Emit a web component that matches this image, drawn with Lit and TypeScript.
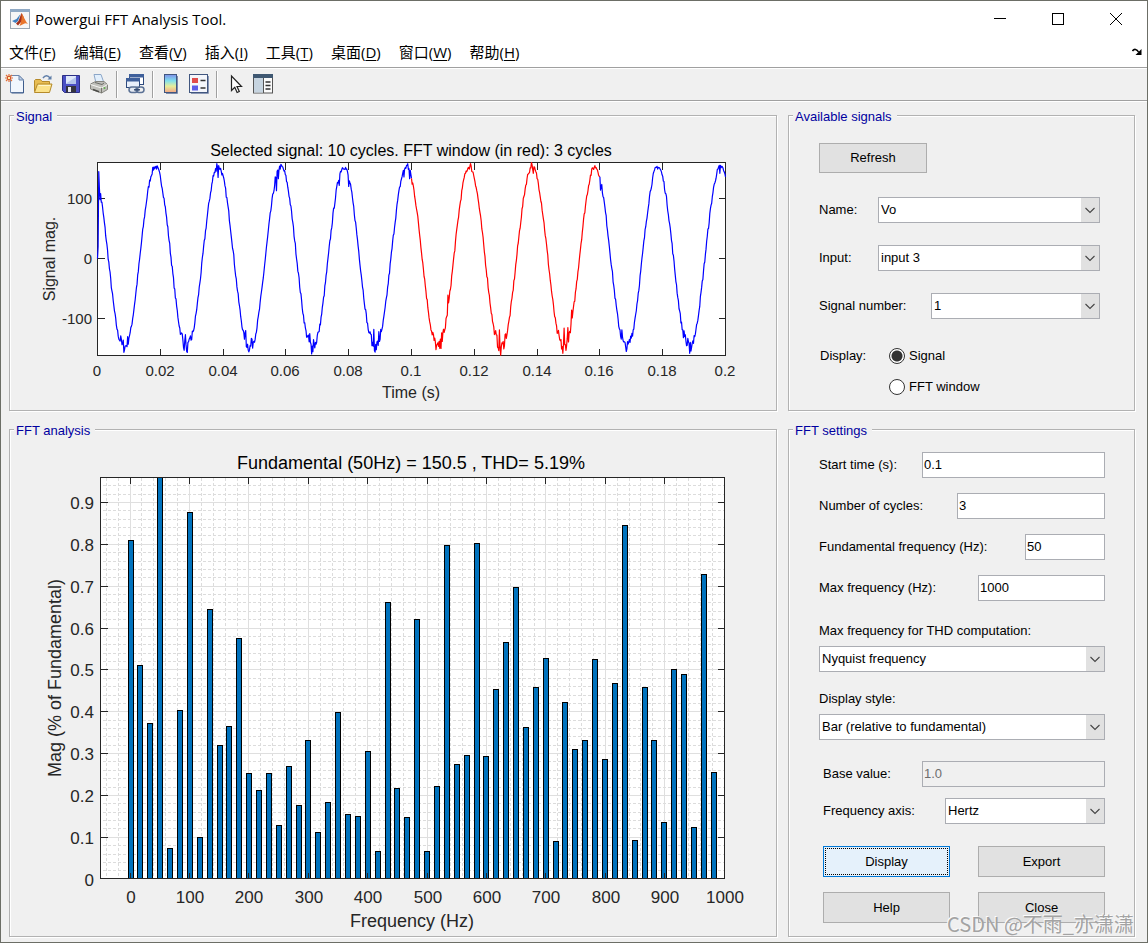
import { LitElement, html, css, svg } from "lit";
import { customElement, state } from "lit/decorators.js";

/** Text shared by both plots. */
const plotStyles = css`
  :host {
    display: block;
  }
  svg {
    display: block;
    width: 100%;
    height: auto;
    font-family: "Liberation Sans", Arial, sans-serif;
    fill: #262626;
  }
  .crisp {
    shape-rendering: crispEdges;
  }
  .face {
    fill: #fff;
  }
  .axis {
    fill: none;
    stroke: #262626;
    stroke-width: 1;
  }
  .title {
    fill: #000;
  }
  .mid {
    text-anchor: middle;
  }
  .end {
    text-anchor: end;
  }
`;

const half = (v: number) => Math.floor(v) + 0.5;

/** Disturbances on the waveform: [time in ms, magnitude]. */
const SPIKES: Array<[number, number]> = [
  [0, 0], [0.2, 20], [0.4, 145], [0.6, 118], [0.8, 98], [1.0, 108], [1.2, 94],
  [7.4, -129], [8.2, -136], [27.0, -126], [27.6, -153], [28.0, -127], [28.4, -155], [29.6, -129],
  [38.0, 158], [38.4, 135], [47.2, -120], [49.0, -133], [56.6, 136], [57.0, 113], [57.6, 133],
  [67.6, -125], [68.2, -159], [68.8, -135], [77.0, 122], [80.0, 120], [87.0, -126], [88.0, -118],
  [88.4, -156], [89.6, -122], [98.8, 158], [99.4, 133], [100.2, 124], [109.6, -124], [111.0, -100],
  [111.6, -61], [116.6, 131], [118.8, 158], [128.0, -119], [128.4, -161], [129.8, -127],
  [138.2, 160], [138.8, 142], [148.6, -116], [148.2, -158], [149.8, -115], [151.0, -86],
  [160.2, 114], [166.4, -119], [167.0, -119], [186.4, -119], [187.2, -127], [188.6, -158],
  [198.2, 142], [188.0, -133], [168.4, -155], [97.6, 136], [36.8, 138],
];

function buildWave(): number[] {
  let seed = 7;
  const rand = () => {
    seed = (seed * 16807) % 2147483647;
    return seed / 2147483647 - 0.5;
  };
  const out: number[] = [];
  for (let i = 0; i <= 1000; i++) {
    const ms = i * 0.2;
    const c = Math.cos((2 * Math.PI * (ms - 18.45)) / 20);
    const rough = c < -0.85 ? 19 : 9;
    const lift = c < -0.85 ? 5 : 0;
    out.push(153 * c + lift + rand() * rough);
  }
  for (const [ms, v] of SPIKES) out[Math.round(ms / 0.2)] = v;
  return out;
}

@customElement("signal-plot")
export class SignalPlot extends LitElement {
  static styles = [
    plotStyles,
    css`
      .tick {
        font-size: 15px;
      }
      .label {
        font-size: 16px;
      }
      .wave {
        fill: none;
        stroke: #00f;
        stroke-width: 1.2;
        stroke-linejoin: round;
      }
      .window {
        stroke: #f00;
      }
    `,
  ];

  private wave = buildWave();

  private trace(from: number, to: number) {
    return this.wave
      .slice(from, to + 1)
      .map((v, i) => `${(87.5 + (from + i) * 0.628).toFixed(2)},${(135.5 - v * 0.6).toFixed(2)}`)
      .join(" ");
  }

  render() {
    const xt = Array.from({ length: 11 }, (_, i) => i);
    return html`<svg viewBox="0 0 766 287" role="img" aria-label="Selected signal">
      <rect class="face" x="87" y="39" width="629" height="194"></rect>
      <g class="axis crisp">
        <rect x="87.5" y="39.5" width="628" height="193"></rect>
        ${xt.slice(1, 10).map((i) => {
          const x = half(87.5 + i * 62.8);
          return svg`<path d="M${x} 232.5v-7M${x} 39.5v7"></path>`;
        })}
        ${[100, 0, -100].map((v) => {
          const y = 135.5 - v * 0.6;
          return svg`<path d="M87.5 ${y}h7M715.5 ${y}h-7"></path>`;
        })}
      </g>
      <polyline class="wave" points=${this.trace(0, 500)}></polyline>
      <polyline class="wave window" points=${this.trace(500, 800)}></polyline>
      <polyline class="wave" points=${this.trace(800, 1000)}></polyline>
      <g class="tick mid">
        ${xt.map((i) => svg`<text x=${Math.floor(87.5 + i * 62.8)} y="253">${String(i / 50)}</text>`)}
      </g>
      <g class="tick end">
        ${[100, 0, -100].map((v) => svg`<text x="82" y=${141 - v * 0.6}>${v}</text>`)}
      </g>
      <text class="label title mid" x="401" y="33">Selected signal: 10 cycles. FFT window (in red): 3 cycles</text>
      <text class="label mid" x="401" y="275">Time (s)</text>
      <text class="label mid" transform="translate(45 136) rotate(-90)">Signal mag.</text>
    </svg>`;
  }
}

/** Magnitude (% of fundamental) of each bin, 50/3 Hz apart. */
const BINS = [
  0.81, 0.51, 0.373, 100, 0.073, 0.403, 0.875, 0.099, 0.645, 0.32, 0.365, 0.575, 0.253, 0.212, 0.253,
  0.129, 0.269, 0.176, 0.332, 0.111, 0.183, 0.399, 0.154, 0.15, 0.305, 0.066, 0.662, 0.217, 0.147,
  0.621, 0.066, 0.221, 0.798, 0.274, 0.296, 0.803, 0.293, 0.453, 0.566, 0.697, 0.363, 0.458, 0.528,
  0.09, 0.423, 0.31, 0.332, 0.525, 0.287, 0.468, 0.846, 0.092, 0.458, 0.332, 0.135, 0.501, 0.489,
  0.124, 0.729, 0.255,
];

@customElement("spectrum-plot")
export class SpectrumPlot extends LitElement {
  static styles = [
    plotStyles,
    css`
      .tick {
        font-size: 17px;
      }
      .label {
        font-size: 18px;
      }
      .major {
        stroke: #dfdfdf;
        fill: none;
      }
      .minor {
        stroke: #dcdcdc;
        stroke-dasharray: 3 2;
        fill: none;
      }
      .bar {
        fill: #0072bd;
        stroke: #000;
        stroke-width: 1;
      }
    `,
  ];

  render() {
    const px = (hz: number) => half(120.1 + hz * 0.594);
    const py = (v: number) => half(442.2 - v * 418.6);
    const xs = Array.from({ length: 11 }, (_, i) => i * 100);
    const ys = Array.from({ length: 10 }, (_, i) => i / 10);
    const minorX = Array.from({ length: 52 }, (_, i) => -40 + i * 20).filter((v) => v % 100 !== 0);
    const minorY = Array.from({ length: 48 }, (_, i) => i).filter((i) => i % 5 !== 0);
    return html`<svg viewBox="0 0 766 499" role="img" aria-label="FFT analysis">
      <rect class="face" x="90" y="40" width="625" height="402"></rect>
      <g class="crisp minor">
        ${minorX.map((v) => svg`<path d="M${px(v)} 41V441"></path>`)}
        ${minorY.map((i) => svg`<path d="M93 ${py(i / 50)}H714"></path>`)}
      </g>
      <g class="crisp major">
        ${xs.slice(0, 10).map((v) => svg`<path d="M${px(v)} 41V441"></path>`)}
        ${ys.slice(1).map((v) => svg`<path d="M91 ${py(v)}H714"></path>`)}
      </g>
      <g class="crisp bar">
        ${BINS.map((v, i) => {
          const x = half(118.05 + i * 9.885);
          const y = v > 0.96 ? 40.5 : py(v);
          return svg`<rect x=${x} y=${y} width="5" height=${441.5 - y}></rect>`;
        })}
      </g>
      <g class="axis crisp">
        <rect x="90.5" y="40.5" width="624" height="401"></rect>
        ${xs.slice(0, 10).map((v) => svg`<path d="M${px(v)} 441.5v-6M${px(v)} 40.5v6"></path>`)}
        ${ys.slice(1).map((v) => svg`<path d="M90.5 ${py(v)}h7M714.5 ${py(v)}h-7"></path>`)}
      </g>
      <g class="tick mid">
        ${xs.map((v) => svg`<text x=${Math.round(px(v))} y="466">${v}</text>`)}
      </g>
      <g class="tick end">
        ${ys.map((v) => svg`<text x="84" y=${Math.round(py(v)) + 6}>${v}</text>`)}
      </g>
      <text class="label title mid" x="401" y="32">Fundamental (50Hz) = 150.5 , THD= 5.19%</text>
      <text class="label mid" x="402" y="490">Frequency (Hz)</text>
      <text class="label mid" transform="translate(51 241) rotate(-90)">Mag (% of Fundamental)</text>
    </svg>`;
  }
}

const MENUS = [
  ["文件", "F"], ["编辑", "E"], ["查看", "V"], ["插入", "I"],
  ["工具", "T"], ["桌面", "D"], ["窗口", "W"], ["帮助", "H"],
];

const ICONS: Record<string, unknown> = {
  new: svg`
    <path d="M5.5 1.5h8.5l4.5 4.5v12.5h-13z" fill="#f1f6fd" stroke="#6d86ac"></path>
    <path d="M14 1.5v4.5h4.500z" fill="#c3d3ea" stroke="#6d86ac"></path>
    <path d="M18.500 7v12h-12" fill="none" stroke="#3e5c8c"></path>
    <path d="M4 0v8M0 4h8M1 1l6 6M7 1L1 7" stroke="#e2703a" stroke-width="1.2"></path>
    <circle cx="4" cy="4" r="1.700" fill="#ffe9a8" stroke="#d4562a"></circle>`,
  open: svg`
    <path d="M1.500 17.500v-11l1-1h5l1.500 2h7.500v4" fill="#e8bd52" stroke="#b58a2b"></path>
    <path d="M1.500 18.500l3-8.500h14.500l-2.500 8.500z" fill="#fbe28a" stroke="#b58a2b"></path>
    <path d="M5.500 11.500h12" stroke="#fff6c9"></path>
    <path d="M10 4c2-3 5-3 7 0" fill="none" stroke="#5f7ea8" stroke-width="1.400"></path>
    <path d="M18.500 1.500v4h-4z" fill="#5f7ea8"></path>`,
  save: svg`
    <path d="M1.500 1.500h17v17h-15l-2-2z" fill="#4a4fc4" stroke="#2b2f86"></path>
    <rect x="5" y="2" width="10" height="8" fill="#dfe8fa"></rect>
    <path d="M5 9.500L15 3v7H5z" fill="#b4c5ec"></path>
    <rect x="5" y="12" width="10" height="6.500" fill="#34343f"></rect>
    <rect x="7" y="13" width="3" height="5" fill="#e8e8ee"></rect>`,
  print: svg`
    <path d="M5 .5h7l3 8.500H7z" fill="#e2effc" stroke="#8ba6c8"></path>
    <path d="M1.500 10l5-2.500h8.500l3.500 3v5l-6 3.500-11-4z" fill="#c0c0bb" stroke="#85857f"></path>
    <path d="M6 8.500l7 2 2-1.500" fill="none" stroke="#6b6b66"></path>
    <path d="M1.500 10.500l11 3.500 6-3.500" fill="none" stroke="#f5f5f2"></path>
    <path d="M12.500 14v5" stroke="#77776f"></path>
    <path d="M4 15.500l6 2.200" stroke="#4c4c48" stroke-width="1.500"></path>
    <circle cx="15.500" cy="14" r="1" fill="#5fae4c"></circle>`,
  link: svg`
    <rect x="4.500" y=".5" width="14" height="10" fill="#fff" stroke="#2e4a7d"></rect>
    <rect x="4" y="0" width="15" height="3.500" fill="#3e5f9a"></rect>
    <rect x="1.500" y="4.500" width="13" height="9" fill="#e9f0fb" stroke="#2e4a7d"></rect>
    <rect x="1" y="4" width="14" height="3.500" fill="#3e5f9a"></rect>
    <rect x="4" y="13" width="9" height="5.500" rx="2.700" fill="#e3e9f2" stroke="#5b7195" stroke-width="1.500"></rect>
    <rect x="11" y="13" width="8" height="5.500" rx="2.700" fill="none" stroke="#5b7195" stroke-width="1.500"></rect>
    <path d="M9 15.800h6" stroke="#31486f" stroke-width="1.400"></path>`,
  colorbar: svg`
    <defs><linearGradient id="cb" x1="0" y1="0" x2="0" y2="1">
      <stop offset="0" stop-color="#7f8fe8"></stop><stop offset=".35" stop-color="#7fe0ee"></stop>
      <stop offset=".65" stop-color="#e6ee9a"></stop><stop offset="1" stop-color="#f2a586"></stop>
    </linearGradient></defs>
    <rect x="3.500" y=".5" width="12" height="18" fill="url(#cb)" stroke="#41567f"></rect>
    <path d="M16.500 2v17.500H5" fill="none" stroke="#7d8cab"></path>`,
  legend: svg`
    <rect x=".5" y=".5" width="18" height="18" fill="#f4f6fb" stroke="#41567f"></rect>
    <path d="M19.500 2v17.500H2" fill="none" stroke="#8b98b5"></path>
    <rect x="3" y="4" width="6" height="5" fill="#e04c4c"></rect>
    <rect x="3" y="11.500" width="6" height="5" fill="#5c5ce8"></rect>
    <path d="M11.500 6.500h5M11.500 14h5" stroke="#333" stroke-width="1.500"></path>`,
  pointer: svg`
    <path d="M6.500 2v14.500l3.300-3.200 2.300 5.200 2.200-1-2.300-5h4.500z" fill="#fff" stroke="#222" stroke-width="1.200"></path>`,
  inspector: svg`
    <rect x=".5" y=".5" width="19" height="18.500" fill="#fbfbfb" stroke="#555"></rect>
    <rect x="0" y="0" width="20" height="4" fill="#3f5872"></rect>
    <rect x="1" y="4" width="9" height="14.500" fill="#c6d4e0"></rect>
    <path d="M10.500 4v15" stroke="#555"></path>
    <path d="M12.500 8h5M12.500 11.500h5M12.500 15h5" stroke="#333" stroke-width="1.400"></path>`,
};

const TOOLS = [
  ["new", "新建图窗"], ["open", "打开文件"], ["save", "保存图窗"], ["print", "打印图窗"], ["", ""],
  ["link", "链接绘图"], ["", ""], ["colorbar", "插入颜色栏"], ["legend", "插入图例"], ["", ""],
  ["pointer", "编辑绘图"], ["inspector", "打开属性检查器"],
];

@customElement("app-root")
export class AppRoot extends LitElement {
  static styles = css`
    :host {
      display: block;
      font: 13px/16px "Liberation Sans", Arial, sans-serif;
      color: #000;
    }
    * {
      box-sizing: border-box;
    }
    button,
    input,
    select {
      font: inherit;
      color: inherit;
      margin: 0;
      border-radius: 0;
    }
    .window {
      position: relative;
      display: flex;
      flex-direction: column;
      min-height: 100vh;
      border: 1px solid #6c6e66;
      background: #f0f0f0;
    }
    .titlebar {
      display: flex;
      align-items: center;
      height: 36px;
      padding: 0 2px 0 9px;
      background: #fff;
    }
    .titlebar h1 {
      flex: 1;
      margin: 0 0 0 5px;
      font: 15px/20px "Open Sans", "Noto Sans", sans-serif;
    }
    .caption {
      display: flex;
      align-items: center;
      justify-content: center;
      width: 58px;
      height: 36px;
      padding: 0;
      border: 0;
      background: none;
    }
    .menubar {
      display: flex;
      align-items: center;
      gap: 18px;
      height: 30px;
      padding: 0 5px 0 8px;
      background: #fff;
    }
    .menu {
      padding: 0;
      border: 0;
      background: none;
      font: 15px/22px "Open Sans", "Noto Sans CJK SC", sans-serif;
    }
    .menu u {
      text-underline-offset: 2px;
    }
    .dock {
      margin-left: auto;
      padding: 0;
      border: 0;
      background: none;
      line-height: 0;
    }
    .toolbar {
      display: flex;
      align-items: center;
      height: 34px;
      border-top: 1px solid #a0a0a0;
      border-bottom: 1px solid #a0a0a0;
      box-shadow: inset 0 1px #fff, 0 1px #fff;
    }
    .tool {
      display: flex;
      justify-content: center;
      width: 28px;
      padding: 0;
      border: 0;
      background: none;
    }
    .sep {
      width: 2px;
      height: 27px;
      margin: 0 3px;
      border-left: 1px solid #a0a0a0;
      border-right: 1px solid #fff;
    }
    .main {
      display: grid;
      grid-template-columns: minmax(0, 1fr) 347px;
      gap: 11px;
      padding: 7px 12px 5px 8px;
    }
    .panel {
      min-width: 0;
      margin: 0;
      padding: 0;
      border: 1px solid #b2b2b2;
      box-shadow: 1px 1px #fff, inset 1px 1px #fff;
    }
    .panel legend {
      height: 15px;
      margin-left: 4px;
      padding: 1px 5px 0 2px;
      line-height: 15px;
      color: #0000a0;
      background: #f0f0f0;
    }
    .signals {
      display: flex;
      flex-direction: column;
      gap: 22px;
      padding: 20px 34px 13px 30px;
    }
    .settings {
      display: flex;
      flex-direction: column;
      gap: 15px;
      padding: 15px 29px 12px 30px;
    }
    .row {
      display: flex;
      align-items: center;
      height: 26px;
    }
    .name {
      flex: none;
      width: 59px;
    }
    .number {
      flex: none;
      width: 112px;
    }
    .grow {
      flex: 1;
      min-width: 0;
    }
    .w80 {
      flex: none;
      width: 80px;
    }
    .w126 {
      flex: none;
      width: 127px;
    }
    .w148 {
      flex: none;
      width: 148px;
    }
    .w160 {
      flex: none;
      width: 160px;
    }
    .w184 {
      flex: none;
      width: 183px;
    }
    .row > label.fill {
      flex: 1;
    }
    .stack {
      display: flex;
      flex-direction: column;
      gap: 7px;
    }
    .stacks {
      display: flex;
      flex-direction: column;
      gap: 19px;
      margin-top: 7px;
    }
    .lower {
      display: flex;
      flex-direction: column;
      gap: 11px;
      margin-top: 6px;
      padding-left: 4px;
    }
    .actions {
      display: grid;
      grid-template-columns: 127px 127px;
      justify-content: space-between;
      gap: 15px;
      margin-top: 11px;
    }
    .field {
      display: block;
      height: 26px;
      padding: 0 1px 2px;
      border: 1px solid #abadb3;
      background: #fff;
    }
    .field:disabled {
      color: #6d6d6d;
      background: #f0f0f0;
    }
    .combo {
      position: relative;
      display: block;
    }
    .combo select {
      display: block;
      width: 100%;
      height: 26px;
      padding: 0 20px 0 2px;
      border: 1px solid #abadb3;
      background: #fff;
      appearance: none;
    }
    .combo svg {
      position: absolute;
      top: 1px;
      right: 1px;
      background: #e1e1e1;
      pointer-events: none;
    }
    .push {
      height: 31px;
      padding: 0;
      border: 1px solid #adadad;
      background: #e1e1e1;
    }
    .push.default {
      border-color: #0078d7;
      background: #e5f1fb;
      outline: 1px dotted #000;
      outline-offset: -3px;
    }
    .refresh {
      align-self: flex-start;
      width: 108px;
      height: 30px;
      margin-bottom: 2px;
    }
    .display {
      display: flex;
      margin: 5px 0 0;
      padding: 0 0 0 1px;
      border: 0;
    }
    .choices {
      display: flex;
      flex-direction: column;
      gap: 11px;
    }
    .choice {
      display: flex;
      align-items: center;
      gap: 4px;
      height: 20px;
    }
    .caption-text {
      width: 69px;
      line-height: 20px;
    }
    .choice input {
      width: 16px;
      height: 16px;
      border: 1px solid #333;
      border-radius: 50%;
      background: #fff;
      appearance: none;
    }
    .choice input:checked {
      background: radial-gradient(circle, #333 5px, #fff 6px);
    }
    .watermark {
      position: absolute;
      right: 13px;
      bottom: 3px;
      font: 20px/30px "Noto Sans CJK SC", sans-serif;
      color: #a3a3a3;
      text-shadow: -1px -1px #fbfbfb;
      pointer-events: none;
    }
  `;

  @state() private view = "signal";

  private combo(id: string, value: string) {
    return html`<span class="combo grow">
      <select id=${id}><option>${value}</option></select>
      <svg width="18" height="24" viewBox="0 0 18 24" aria-hidden="true">
        <path d="M4.500 10l4.500 4.500 4.500-4.500" fill="none" stroke="#444" stroke-width="1.100"></path>
      </svg>
    </span>`;
  }

  private radio(id: string, text: string) {
    return html`<div class="choice">
      <input type="radio" name="view" id=${id} .checked=${this.view === id} @change=${() => (this.view = id)} />
      <label for=${id}>${text}</label>
    </div>`;
  }

  render() {
    return html`<div class="window">
      <header class="titlebar">
        <svg width="20" height="20" viewBox="0 0 20 20" aria-hidden="true">
          <rect x=".5" y=".5" width="19" height="19" fill="#f6f6f6" stroke="#9aa5b1"></rect>
          <rect x="0" y="0" width="20" height="3" fill="#8fa9c4"></rect>
          <path d="M2 12l4.500-2 4-5-2.500 7-2.500 2z" fill="#3f7fc0"></path>
          <path d="M6 14.500l2.500-2.500 3-8 2 4 1 4-4 1.500-2.500 3z" fill="#a3301c"></path>
          <path d="M11.500 4c1.500 1.500 3.500 8 6.500 11-2-1-3-1-4.500 0l-4 2c2-4 2.500-9 2-13z" fill="#e8742a"></path>
        </svg>
        <h1>Powergui FFT Analysis Tool.</h1>
        <button class="caption" aria-label="最小化">
          <svg width="12" height="12"><path d="M0 5.500h12" stroke="#000"></path></svg>
        </button>
        <button class="caption" aria-label="最大化">
          <svg width="12" height="12"><rect x=".5" y=".5" width="11" height="11" fill="none" stroke="#000"></rect></svg>
        </button>
        <button class="caption" aria-label="关闭">
          <svg width="12" height="12"><path d="M0 0l12 12M12 0L0 12" stroke="#000"></path></svg>
        </button>
      </header>
      <nav class="menubar">
        ${MENUS.map(([t, k]) => html`<button class="menu">${t}(<u>${k}</u>)</button>`)}
        <button class="dock" aria-label="停靠">
          <svg width="10" height="8" viewBox="0 0 10 8">
            <path d="M.5 3C2 .5 5 1 6.500 4" fill="none" stroke="#000" stroke-width="1.600"></path>
            <path d="M9.500 1v6h-6z"></path>
          </svg>
        </button>
      </nav>
      <div class="toolbar" role="toolbar">
        ${TOOLS.map(([id, label]) =>
          id
            ? html`<button class="tool" aria-label=${label}>
                <svg width="20" height="20" viewBox="0 0 20 20">${ICONS[id]}</svg>
              </button>`
            : html`<span class="sep"></span>`
        )}
      </div>
      <main class="main">
        <fieldset class="panel">
          <legend>Signal</legend>
          <signal-plot></signal-plot>
        </fieldset>
        <fieldset class="panel">
          <legend>Available signals</legend>
          <div class="signals">
            <button class="push refresh">Refresh</button>
            <div class="row"><label class="name" for="name">Name:</label>${this.combo("name", "Vo")}</div>
            <div class="row"><label class="name" for="input">Input:</label>${this.combo("input", "input 3")}</div>
            <div class="row">
              <label class="number" for="number">Signal number:</label>${this.combo("number", "1")}
            </div>
            <div class="display" role="radiogroup" aria-labelledby="display-caption">
              <span class="caption-text" id="display-caption">Display:</span>
              <div class="choices">${this.radio("signal", "Signal")}${this.radio("window", "FFT window")}</div>
            </div>
          </div>
        </fieldset>
        <fieldset class="panel">
          <legend>FFT analysis</legend>
          <spectrum-plot></spectrum-plot>
        </fieldset>
        <fieldset class="panel">
          <legend>FFT settings</legend>
          <div class="settings">
            <div class="row">
              <label class="fill" for="start">Start time (s):</label><input class="field w184" id="start" value="0.1" />
            </div>
            <div class="row">
              <label class="fill" for="cycles">Number of cycles:</label
              ><input class="field w148" id="cycles" value="3" />
            </div>
            <div class="row">
              <label class="fill" for="fund">Fundamental frequency (Hz):</label
              ><input class="field w80" id="fund" value="50" />
            </div>
            <div class="row">
              <label class="fill" for="max">Max frequency (Hz):</label><input class="field w126" id="max" value="1000" />
            </div>
            <div class="stacks">
              <div class="stack">
                <label for="thd">Max frequency for THD computation:</label>${this.combo("thd", "Nyquist frequency")}
              </div>
              <div class="stack">
                <label for="style">Display style:</label>${this.combo("style", "Bar (relative to fundamental)")}
              </div>
            </div>
            <div class="lower">
              <div class="row">
                <label class="fill" for="base">Base value:</label
                ><input class="field w184" id="base" value="1.0" disabled />
              </div>
              <div class="row">
                <label class="fill" for="axis">Frequency axis:</label>
                <span class="w160">${this.combo("axis", "Hertz")}</span>
              </div>
              <div class="actions">
                <button class="push default">Display</button>
                <button class="push">Export</button>
                <button class="push">Help</button>
                <button class="push">Close</button>
              </div>
            </div>
          </div>
        </fieldset>
      </main>
      <span class="watermark">CSDN @不雨_亦潇潇</span>
    </div>`;
  }
}
